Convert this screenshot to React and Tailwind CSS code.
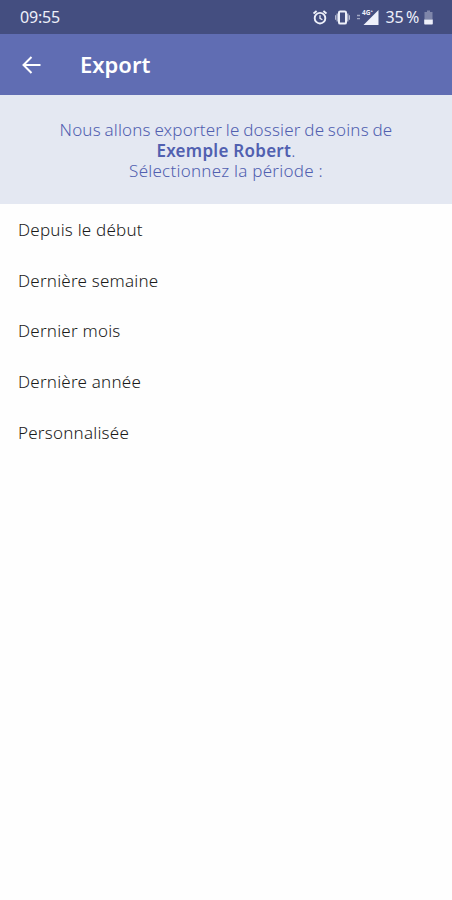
const periods = [
  { id: "all", label: "Depuis le début" },
  { id: "week", label: "Dernière semaine" },
  { id: "month", label: "Dernier mois" },
  { id: "year", label: "Dernière année" },
  { id: "custom", label: "Personnalisée" },
];

function AlarmIcon() {
  return (
    <svg viewBox="0 0 14 15" className="h-[15px] w-[14px]" fill="none" stroke="currentColor">
      <circle cx="7" cy="8.2" r="5.3" strokeWidth="1.9" />
      <path d="M0.6 3.6 3.6 1.1M13.4 3.6 10.4 1.1" strokeWidth="1.9" />
      <path d="M7 5.2v3.2l2.4 1.4" strokeWidth="1.3" />
    </svg>
  );
}

function VibrateIcon() {
  return (
    <svg viewBox="0 0 15 15" className="h-[15px] w-[15px]" fill="none" stroke="currentColor">
      <rect x="4" y="1.4" width="7" height="12.2" rx="1.2" strokeWidth="2" />
      <path d="M2.2 3.5v8M12.8 3.5v8" strokeWidth="1.1" opacity="0.8" />
      <path d="M0.6 5.2v4.6M14.4 5.2v4.6" strokeWidth="1.1" opacity="0.7" />
    </svg>
  );
}

function SignalIcon() {
  return (
    <svg viewBox="0 0 23 16" className="h-4 w-[23px]" fill="currentColor">
      <path d="M22.5 1V16H7.5z" />
      <path d="M1 6.5h3M1 9.7h3" stroke="currentColor" strokeWidth="1.3" opacity="0.55" />
      <text x="6" y="5.8" fontSize="6.5" fontWeight="700">4G⁺</text>
    </svg>
  );
}

function BatteryIcon() {
  return (
    <svg viewBox="0 0 9 15" className="h-[15px] w-[9px]" fill="currentColor">
      <path d="M3 0.5h3V2h2.5v7.5h-8V2H3z" opacity="0.35" />
      <path d="M0.2 9.5h8.6v4.3a.7.7 0 0 1-.7.7H.9a.7.7 0 0 1-.7-.7z" />
    </svg>
  );
}

function StatusBar() {
  return (
    <div className="flex h-[34px] items-center bg-[#444e80] pr-[19px] pl-5 text-[#eef0fa]">
      <span className="text-[16px] tracking-[-0.2px]">09:55</span>
      <div className="ml-auto flex items-center">
        <AlarmIcon />
        <span className="ml-[8px]"><VibrateIcon /></span>
        <span className="ml-[6px]"><SignalIcon /></span>
        <span className="ml-[7px] text-[16px] tracking-[-0.2px] [word-spacing:-1.5px]">35 %</span>
        <span className="ml-[5px]"><BatteryIcon /></span>
      </div>
    </div>
  );
}

function AppBar() {
  return (
    <header className="flex h-[61px] items-center bg-[#606db3] pl-[22px] text-white">
      <button aria-label="Retour" className="w-[58px]">
        <svg viewBox="0 0 19 18" className="h-[18px] w-[19px]" fill="none" stroke="currentColor" strokeWidth="2">
          <path d="M18.5 9H2M9.5 1 1.5 9l8 8" />
        </svg>
      </button>
      <h1 className="text-[22px] font-semibold">Export</h1>
    </header>
  );
}

export default function App() {
  return (
    <div className="min-h-[900px] w-[452px] bg-[#fefefe] font-['Noto_Sans','Open_Sans',sans-serif]">
      <StatusBar />
      <AppBar />
      <div className="flex h-[109px] flex-col justify-center bg-[#e4e8f2] pt-[3px] text-center text-[17px] leading-[20.5px] font-light text-[#5160b0]">
        <p className="tracking-[0.17px] [word-spacing:-0.9px]">Nous allons exporter le dossier de soins de</p>
        <p className="tracking-[0.27px]"><b className="font-semibold">Exemple Robert</b>.</p>
        <p className="tracking-[0.25px]">Sélectionnez la période :</p>
      </div>
      <ul className="pt-[0.6px] text-[17px] font-light tracking-[0.22px] text-[#1a1a1a]">
        {periods.map((p) => (
          <li key={p.id} className="flex h-[50.6px] items-center pl-[18px]">
            {p.label}
          </li>
        ))}
      </ul>
    </div>
  );
}
